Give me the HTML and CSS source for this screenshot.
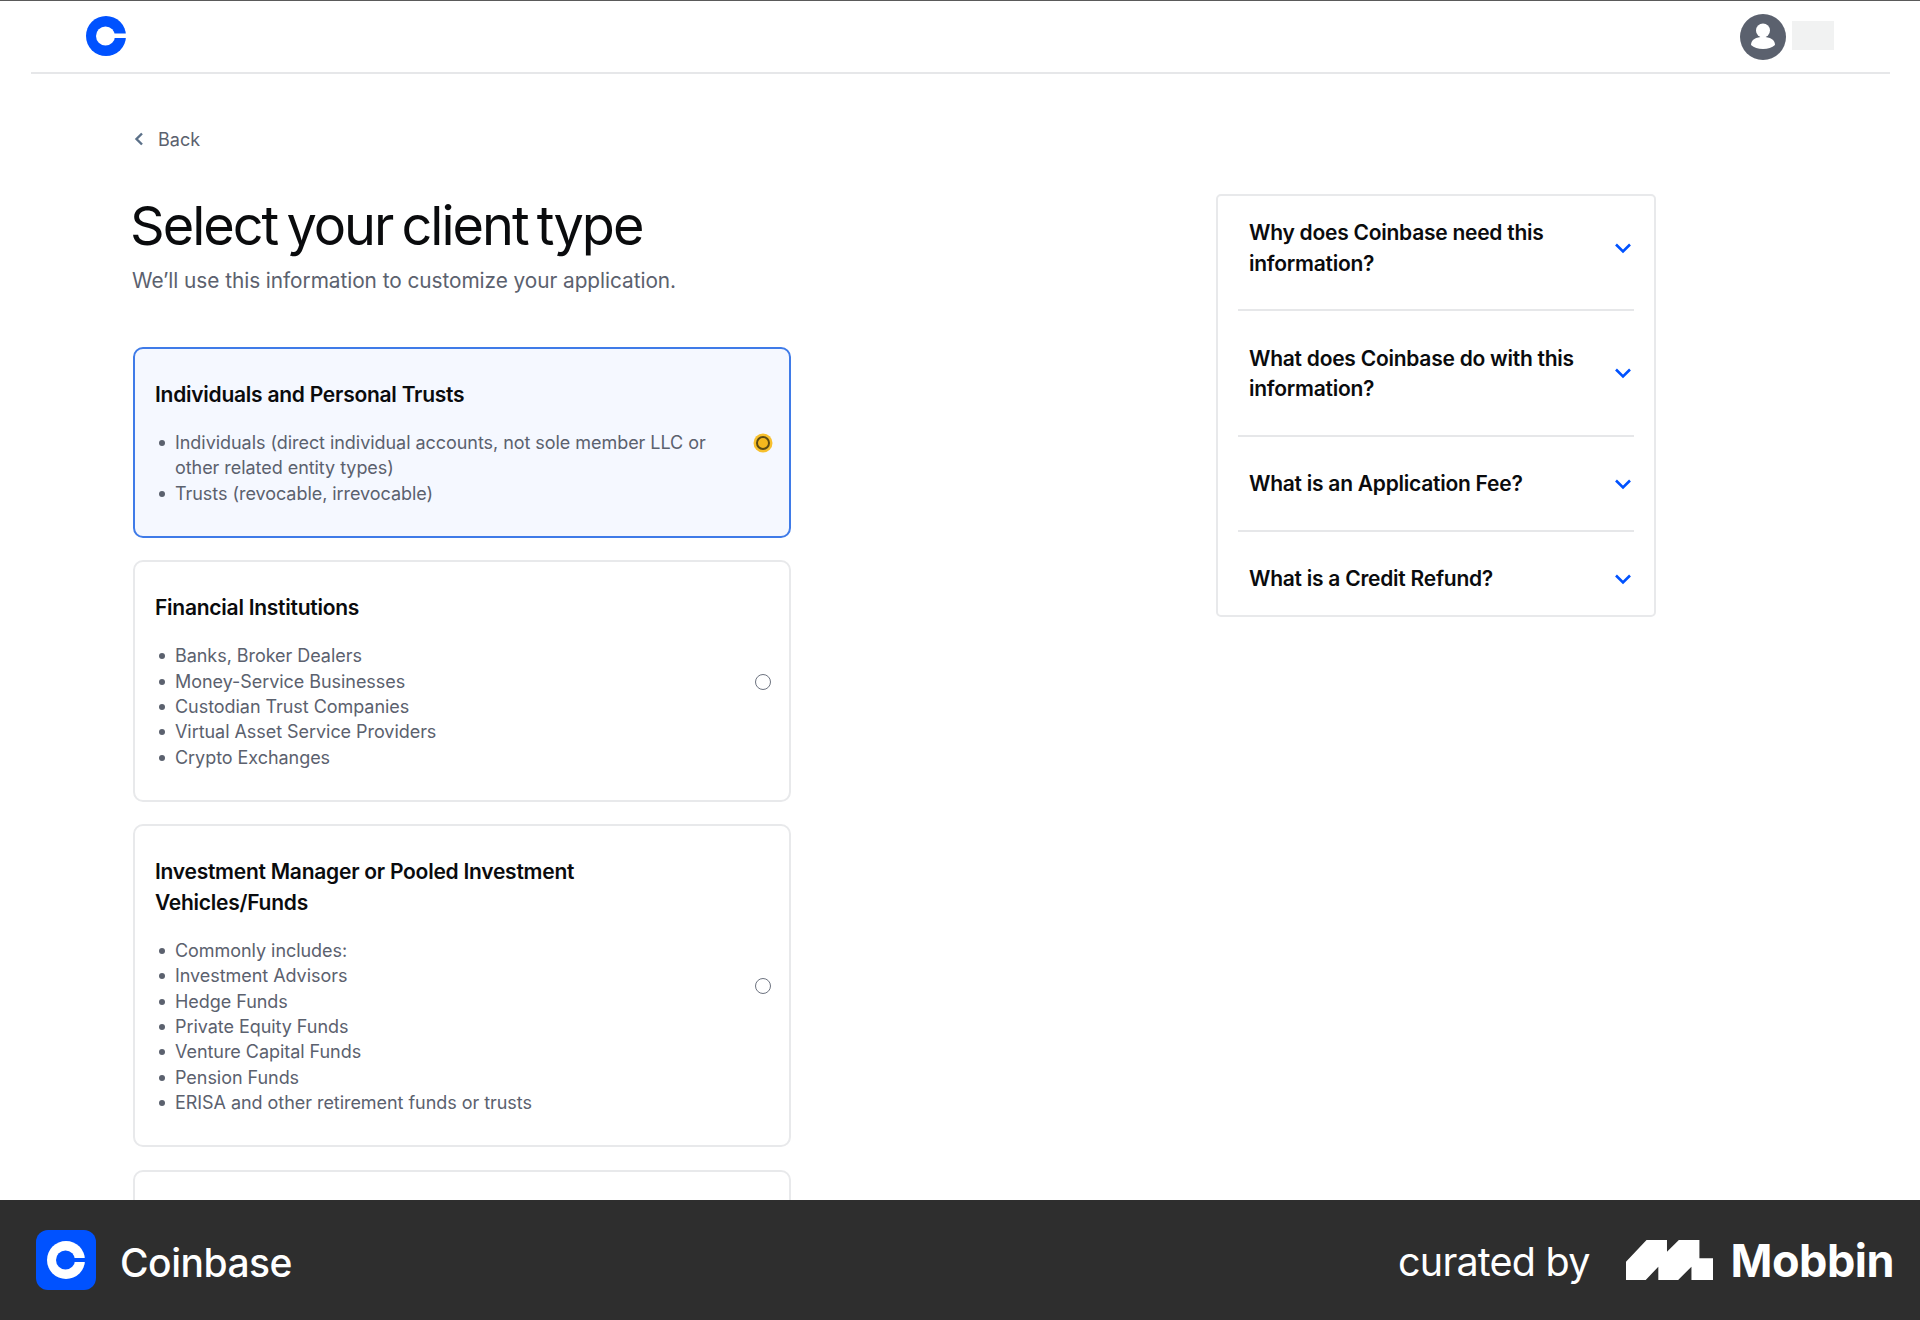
FILE: index.html
```html
<!DOCTYPE html>
<html lang="en">
<head>
<meta charset="utf-8">
<title>Select your client type</title>
<link rel="stylesheet" href="styles.css">
</head>
<body>
<main class="page">
  <header class="topbar">
    <svg class="logo" viewBox="0 0 40 40"><circle cx="20" cy="20" r="20" fill="#0052ff"/><circle cx="19.500" cy="20" r="9.500" fill="#fff"/><rect x="24" y="17.500" width="16" height="4.500" fill="#fff"/></svg>
    <div class="account">
      <svg class="avatar" viewBox="0 0 46 46"><circle cx="23" cy="23" r="23" fill="#5b616e"/><circle cx="23" cy="16.500" r="7" fill="#fff"/><path d="M11 31c0-5.500 5-8 12-8s12 2.500 12 8c-3 2.500-7 4-12 4s-9-1.500-12-4z" fill="#fff"/></svg>
      <div class="name-blur"></div>
    </div>
  </header>
  <div class="content">
    <section class="left">
      <a class="back"><svg class="back-icon" viewBox="0 0 10 14"><path d="M8 1.500 2.500 7 8 12.500" fill="none" stroke="#5b7088" stroke-width="2.400"/></svg><span>Back</span></a>
      <h1 class="title">Select your client type</h1>
      <p class="sub">We’ll use this information to customize your application.</p>
      <div class="cards">
        <div class="card card-selected">
          <div class="card-body">
            <h2 class="card-title">Individuals and Personal Trusts</h2>
            <ul class="list">
              <li>Individuals (direct individual accounts, not sole member LLC or other related entity types)</li>
              <li>Trusts (revocable, irrevocable)</li>
            </ul>
          </div>
          <span class="radio radio-on"></span>
        </div>
        <div class="card">
          <div class="card-body">
            <h2 class="card-title">Financial Institutions</h2>
            <ul class="list">
              <li>Banks, Broker Dealers</li>
              <li>Money-Service Businesses</li>
              <li>Custodian Trust Companies</li>
              <li>Virtual Asset Service Providers</li>
              <li>Crypto Exchanges</li>
            </ul>
          </div>
          <span class="radio"></span>
        </div>
        <div class="card">
          <div class="card-body">
            <h2 class="card-title">Investment Manager or Pooled Investment Vehicles/Funds</h2>
            <ul class="list">
              <li>Commonly includes:</li>
              <li>Investment Advisors</li>
              <li>Hedge Funds</li>
              <li>Private Equity Funds</li>
              <li>Venture Capital Funds</li>
              <li>Pension Funds</li>
              <li>ERISA and other retirement funds or trusts</li>
            </ul>
          </div>
          <span class="radio"></span>
        </div>
        <div class="card card-empty"></div>
      </div>
    </section>
    <aside class="faq">
      <div class="faq-item faq-first"><span>Why does Coinbase need this information?</span><svg class="chev" viewBox="0 0 18 12"><path d="M2 2.500 9 9.500l7-7" fill="none" stroke="#0052ff" stroke-width="2.600"/></svg></div>
      <div class="faq-item faq-two"><span>What does Coinbase do with this information?</span><svg class="chev" viewBox="0 0 18 12"><path d="M2 2.500 9 9.500l7-7" fill="none" stroke="#0052ff" stroke-width="2.600"/></svg></div>
      <div class="faq-item"><span>What is an Application Fee?</span><svg class="chev" viewBox="0 0 18 12"><path d="M2 2.500 9 9.500l7-7" fill="none" stroke="#0052ff" stroke-width="2.600"/></svg></div>
      <div class="faq-item faq-last"><span>What is a Credit Refund?</span><svg class="chev" viewBox="0 0 18 12"><path d="M2 2.500 9 9.500l7-7" fill="none" stroke="#0052ff" stroke-width="2.600"/></svg></div>
    </aside>
  </div>
</main>
<footer class="footer">
  <div class="brand">
    <div class="app-icon"><svg class="app-logo" viewBox="0 0 40 40"><circle cx="20" cy="20" r="19" fill="#fff"/><circle cx="19.500" cy="20" r="9.500" fill="#0052ff"/><rect x="24" y="18" width="16" height="4" fill="#0052ff"/></svg></div>
    <span class="brand-name">Coinbase</span>
  </div>
  <div class="curated">
    <span class="curated-by">curated by</span>
    <svg class="mobbin-mark" viewBox="0 0 86.400 42.900" preserveAspectRatio="none"><path d="M0 23.200 20.400 0h20.300v12.500L52.500 0h20.400v19.600h13.500v23.300H65V28.600L51.800 42.900H32.100V28.600L19.600 42.900H0z" fill="#fff"/></svg>
    <span class="mobbin">Mobbin</span>
  </div>
</footer>
</body>
</html>
```
FILE: styles.css
```css
* { box-sizing: border-box; }
html, body { margin: 0; padding: 0; }
body { width: 1920px; height: 1320px; overflow: hidden; background: #fff; font-family: Inter, "Liberation Sans", sans-serif; color: #0a0b0d; }
.page { height: 1200px; overflow: hidden; border-top: 1px solid #5a5a5a; }
.topbar { margin: 0 30px 0 31px; height: 73px; border-bottom: 2px solid #e6e7e9; display: flex; align-items: center; justify-content: space-between; padding: 0 56px 0 55px; }
.logo { width: 40px; height: 40px; margin-top: -1px; }
.account { display: flex; align-items: center; gap: 6px; }
.avatar { width: 46px; height: 46px; }
.name-blur { width: 42px; height: 29px; background: #f1f2f2; margin-top: -3px; }
.content { display: grid; grid-template-columns: 658px 440px; column-gap: 425px; padding: 0 0 0 133px; }
.left { padding-top: 53px; }
.back { display: flex; align-items: center; gap: 14px; height: 24px; color: #5b616e; font-size: 18px; }
.back-icon { width: 10px; height: 14px; margin-left: 1px; }
.title { margin: 43px 0 0 -3px; font-size: 54px; line-height: 64px; font-weight: 400; letter-spacing: -2px; word-spacing: -4px; }
.sub { margin: 8px 0 0 -1px; font-size: 20.800px; line-height: 30px; color: #5b616e; letter-spacing: -0.05px; }
.cards { display: flex; flex-direction: column; gap: 22.500px; margin-top: 51px; }
.card { border: 2px solid #e8e9eb; border-radius: 10px; padding: 31px 18px 29.500px 20px; display: flex; align-items: center; justify-content: space-between; background: #fff; }
.card-selected { background: #f5f8ff; border-color: #3f7be8; }
.card-empty { height: 120px; }
.card-body { width: 560px; }
.card-title { margin: 0; max-width: 500px; font-size: 21px; line-height: 30.500px; font-weight: 600; letter-spacing: -0.25px; }
.list { margin: 19.500px 0 0 0; padding: 0 0 0 20px; list-style: none; font-size: 18px; line-height: 25.400px; color: #5b616e; letter-spacing: -0.05px; }
.list li { position: relative; }
.list li::before { content: ""; position: absolute; left: -16px; top: 10px; width: 6px; height: 6px; border-radius: 50%; background: #5b616e; }
.radio { width: 16px; height: 16px; border: 1.500px solid #6d7380; border-radius: 50%; flex: none; background: #fff; }
.radio-on { width: 14px; height: 14px; margin-right: 1px; border: 2px solid #5c4a12; background: #f5b81e; box-shadow: 0 0 0 2.500px #f7c02e; }
.faq { margin-top: 120px; height: 423px; border: 2px solid #e8e9eb; border-radius: 5px; padding: 0 20px; align-self: start; }
.faq-item { display: flex; align-items: center; justify-content: space-between; border-bottom: 2px solid #e6e7e9; padding: 0 2px 0 11px; font-size: 21px; line-height: 30.500px; font-weight: 600; letter-spacing: -0.25px; height: 95px; }
.faq-item span { padding-top: 2px; }
.faq-first { height: 115px; padding-bottom: 10px; }
.faq-two { height: 126px; }
.faq-first span, .faq-two span { width: 340px; }
.faq-last { border-bottom: 0; height: 83px; padding-top: 10px; }
.chev { width: 18px; height: 12px; flex: none; }
.footer { height: 120px; background: #2e2e2e; color: #fff; display: flex; align-items: center; justify-content: space-between; padding: 0 26px 0 36px; }
.brand { display: flex; align-items: center; gap: 24px; }
.app-icon { width: 60px; height: 60px; background: #0052ff; border-radius: 12px; display: flex; align-items: center; justify-content: center; }
.app-logo { width: 40px; height: 40px; }
.brand-name { font-size: 39px; font-weight: 500; letter-spacing: -0.5px; padding-top: 4px; }
.curated { display: flex; align-items: center; }
.curated-by { font-size: 39.500px; font-weight: 400; letter-spacing: -0.8px; margin-right: 36px; padding-top: 3px; }
.mobbin-mark { width: 87px; height: 40px; margin-right: 18px; }
.mobbin { font-size: 45px; font-weight: 700; letter-spacing: -0.5px; }
```
